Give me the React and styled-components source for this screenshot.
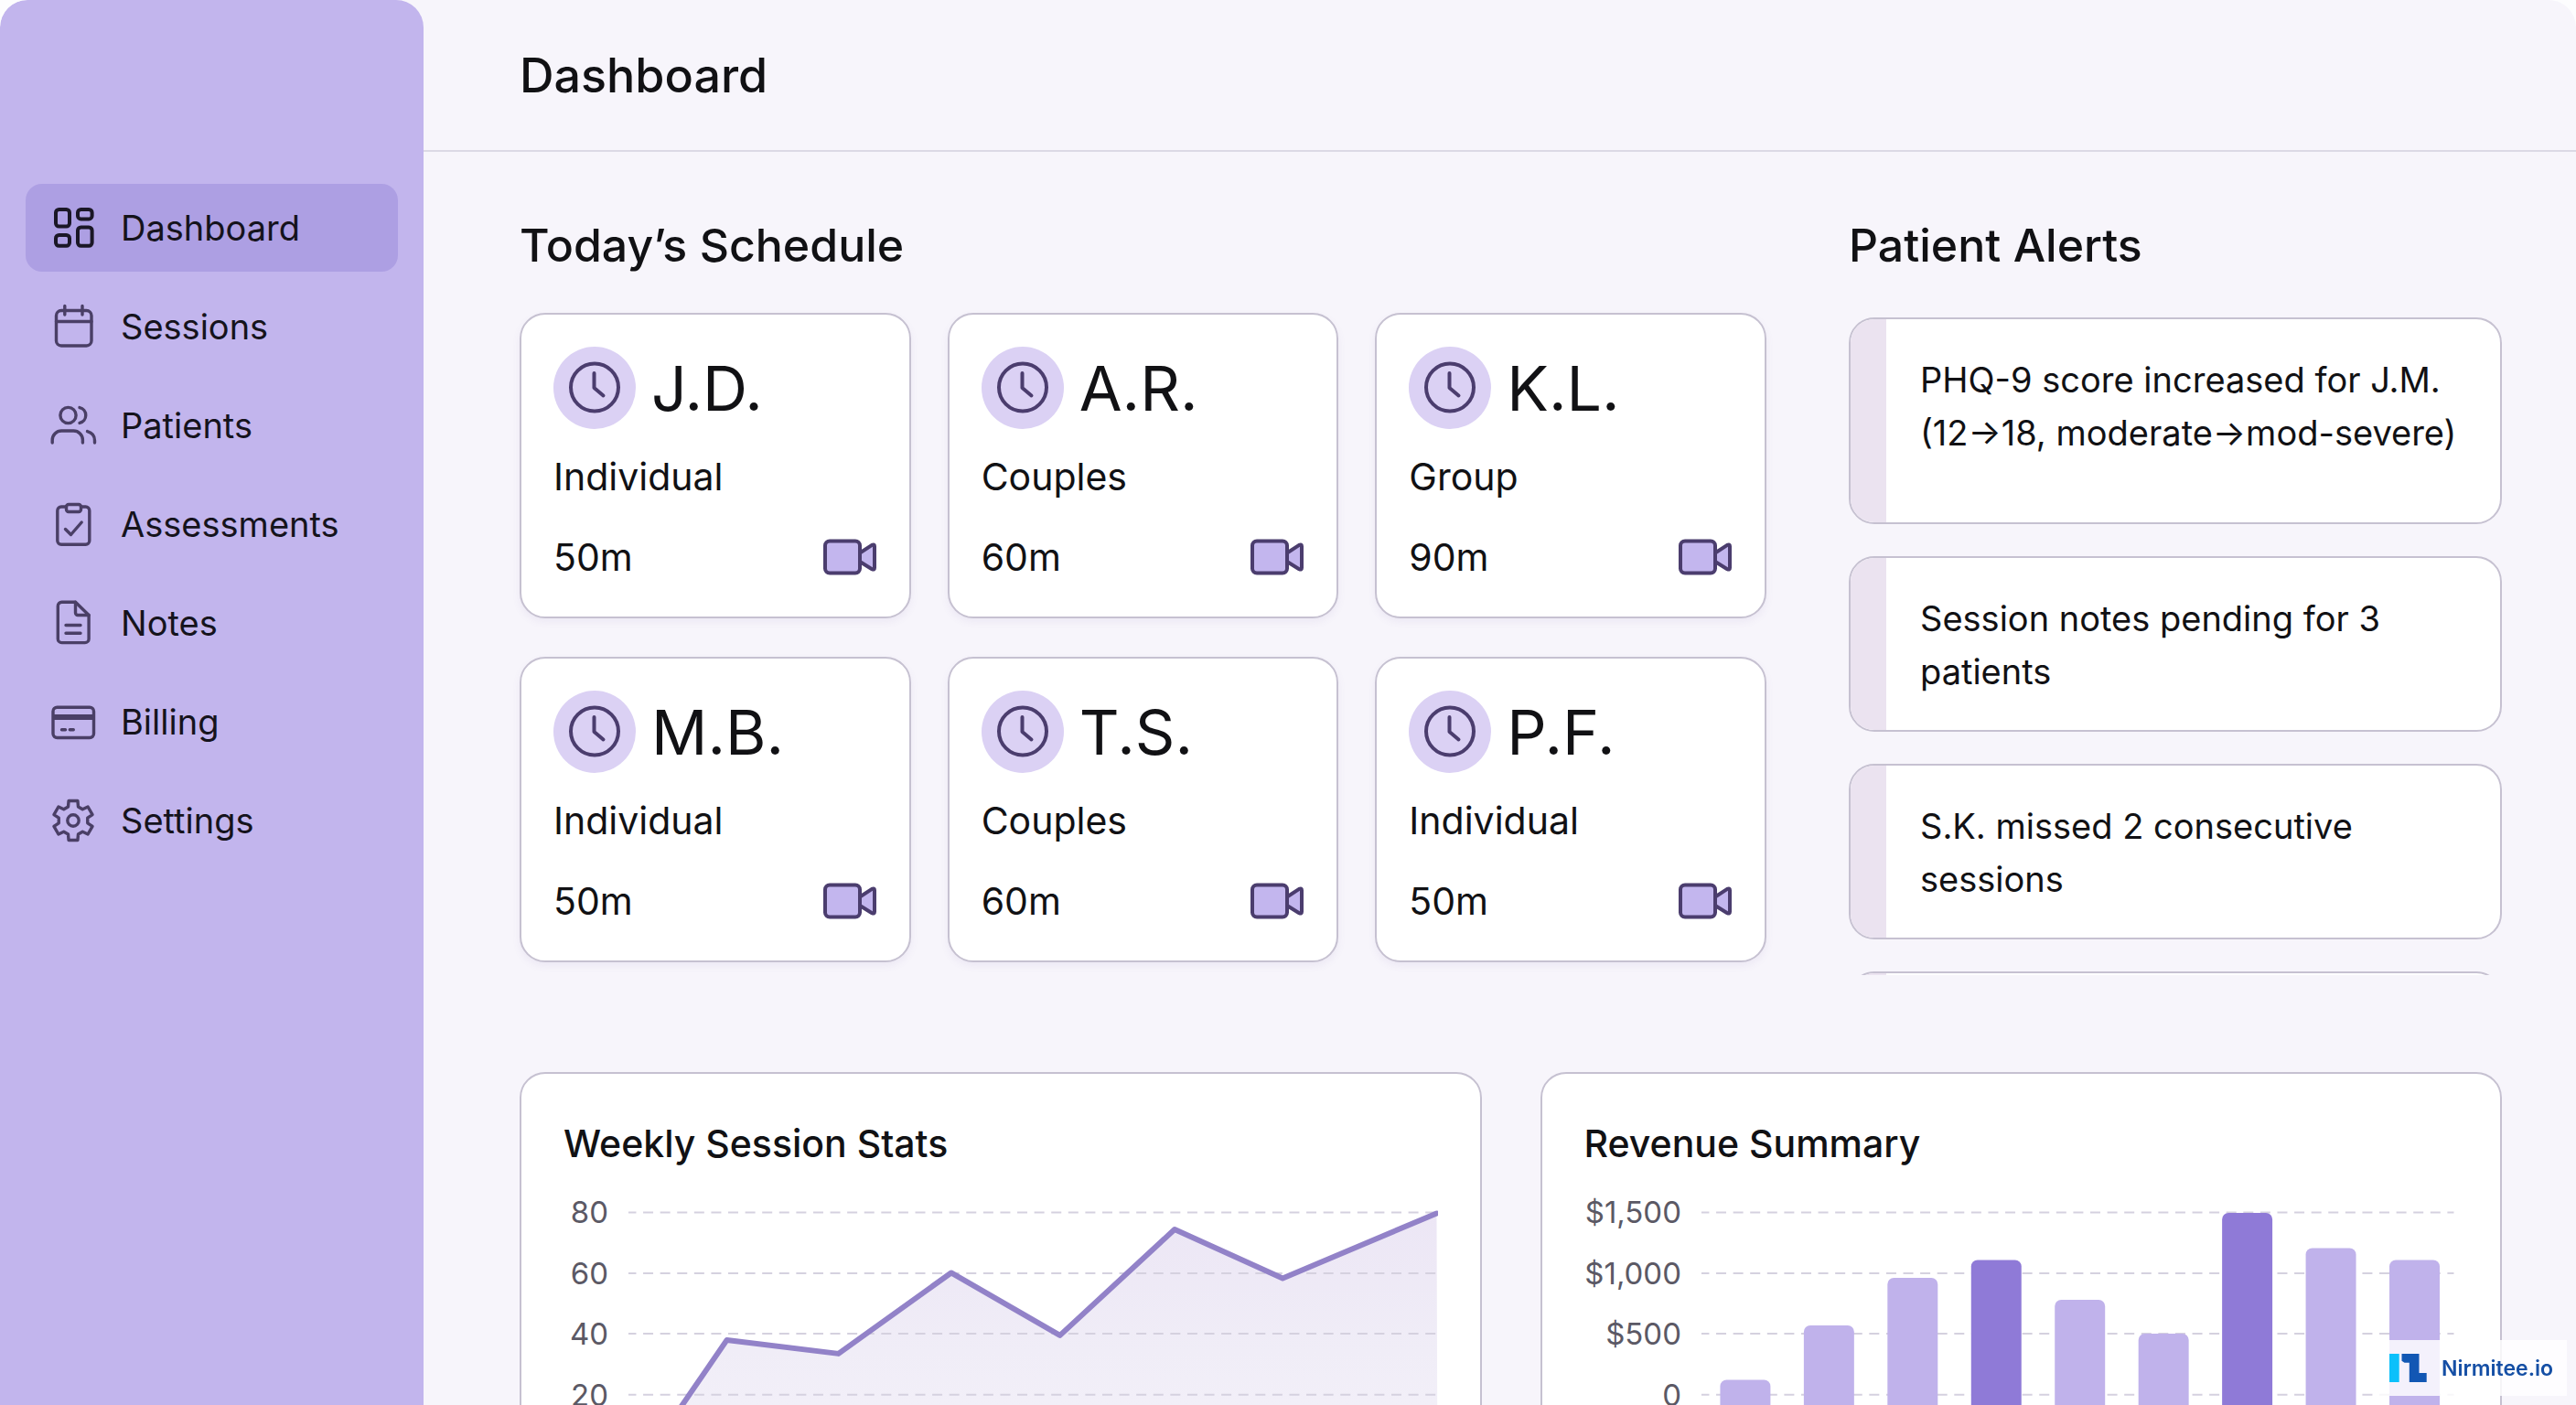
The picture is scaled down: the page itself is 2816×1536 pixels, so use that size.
import * as React from "react";
import styled, { createGlobalStyle } from "styled-components";

const GlobalStyle = createGlobalStyle`
  * {
    box-sizing: border-box;
  }

  body {
    margin: 0;
    background: #fdfdfe;
    color: #111114;
    font-family: "Inter", "Liberation Sans", sans-serif;
  }

  h1, h2, h3, p, ul {
    margin: 0;
    padding: 0;
  }

  ul {
    list-style: none;
  }
`;

const Page = styled.div`
  display: flex;
  height: 100vh;
  overflow: hidden;
  background: #f7f5fb;
  border-radius: 30px 30px 0 0;
`;

const Sidebar = styled.nav`
  flex: none;
  width: 463px;
  padding: 201px 28px 0;
  background: #c2b5ed;
  border-radius: 30px 30px 0 0;

  ul {
    display: flex;
    flex-direction: column;
    gap: 12px;
  }
`;

const NavLink = styled.a`
  display: flex;
  align-items: center;
  gap: 26px;
  height: 96px;
  padding: 0 26px;
  border-radius: 18px;
  font-size: 38px;
  color: #15131c;
  text-decoration: none;
  background: ${(props) => (props.$active ? "#ad9fe3" : "transparent")};

  svg {
    flex: none;
    width: 52px;
    height: 52px;
    fill: none;
    stroke: ${(props) => (props.$active ? "#1b1726" : "#4a3f66")};
    stroke-width: ${(props) => (props.$active ? 4 : 3.4)};
    stroke-linecap: round;
    stroke-linejoin: round;
  }
`;

const Main = styled.main`
  flex: 1;
  min-width: 0;
`;

const Header = styled.header`
  display: flex;
  align-items: center;
  height: 166px;
  padding: 0 105px;
  border-bottom: 2px solid #dcd9e5;

  h1 {
    font-size: 52px;
    font-weight: 500;
  }
`;

const Content = styled.div`
  padding: 70px 81px 0 105px;
`;

const TopRow = styled.div`
  display: grid;
  grid-template-columns: minmax(0, 1fr) 714px;
  gap: 90px;
`;

const SectionTitle = styled.h2`
  font-size: 50px;
  line-height: 64px;
  font-weight: 500;
`;

const ScheduleGrid = styled.ul`
  display: grid;
  grid-template-columns: repeat(3, minmax(0, 1fr));
  gap: 42px 40px;
  margin-top: 42px;
`;

const SessionCard = styled.li`
  padding: 35px 36px 39px 35px;
  background: #fff;
  border: 2px solid #c6c1d1;
  border-radius: 28px;
  box-shadow: 0 4px 8px rgba(110, 90, 170, 0.08);
`;

const SessionHead = styled.div`
  display: flex;
  align-items: center;
  gap: 17px;

  svg {
    flex: none;
    width: 90px;
    height: 90px;
  }

  h3 {
    font-size: 68px;
    line-height: 90px;
    font-weight: 400;
  }
`;

const SessionType = styled.p`
  margin-top: 26px;
  font-size: 41px;
  line-height: 52px;
`;

const SessionFoot = styled.div`
  display: flex;
  align-items: center;
  justify-content: space-between;
  margin-top: 36px;
  font-size: 41px;
  line-height: 52px;
`;

const VideoButton = styled.button`
  display: flex;
  padding: 0;
  border: 0;
  background: none;

  svg {
    width: 58px;
    height: 40px;
  }
`;

const AlertList = styled.ul`
  display: flex;
  flex-direction: column;
  gap: 35px;
  height: 719px;
  margin-top: 47px;
  overflow: hidden;
`;

const AlertCard = styled.li`
  flex: none;
  display: flex;
  min-height: ${(props) => (props.$tall ? "226px" : "192px")};
  overflow: hidden;
  background: #fff;
  border: 2px solid #c6c1d1;
  border-radius: 28px;

  &::before {
    content: "";
    flex: none;
    width: 39px;
    background: #ebe3f0;
  }

  p {
    padding: 37px 24px 35px 37px;
    font-size: 38px;
    line-height: 58px;
  }
`;

const ChartRow = styled.div`
  display: grid;
  grid-template-columns: repeat(2, minmax(0, 1fr));
  gap: 64px;
  margin-top: 106px;
`;

const ChartCard = styled.section`
  padding: 48px 46px;
  background: #fff;
  border: 2px solid #c6c1d1;
  border-radius: 28px;

  h3 {
    font-size: 41px;
    line-height: 56px;
    font-weight: 500;
  }

  svg {
    display: block;
    width: 100%;
    margin-top: 20px;
  }

  text {
    font-size: 33px;
    fill: #5b5965;
    text-anchor: end;
  }
`;

const Brand = styled.a`
  position: fixed;
  right: 10px;
  bottom: 10px;
  display: flex;
  align-items: center;
  gap: 16px;
  height: 61px;
  padding: 0 15px;
  background: rgba(255, 255, 255, 0.82);
  color: #154fa5;
  font-size: 23px;
  font-weight: 600;
  text-decoration: none;

  svg {
    width: 41px;
    height: 31px;
  }
`;

// six teeth, four corners each
const gearPoints = Array.from({ length: 6 }, (_, tooth) =>
  [
    [-20, 16],
    [-13, 22],
    [13, 22],
    [20, 16],
  ].map(([offset, radius]) => {
    const angle = ((tooth * 60 - 90 + offset) * Math.PI) / 180;
    return `${26 + radius * Math.cos(angle)},${26 + radius * Math.sin(angle)}`;
  })
)
  .flat()
  .join(" ");

const navItems = [
  {
    label: "Dashboard",
    icon: (
      <>
        <rect x="7" y="6" width="15" height="18.5" rx="3.5" />
        <rect x="31" y="6" width="15.6" height="10.4" rx="3.5" />
        <rect x="7" y="34" width="15" height="11.8" rx="3.5" />
        <rect x="31" y="25.5" width="15.6" height="20.3" rx="3.5" />
      </>
    ),
  },
  {
    label: "Sessions",
    icon: (
      <>
        <rect x="7.5" y="8.5" width="38.5" height="38.5" rx="5.5" />
        <path d="M16.8 3.5v9.5M36 3.5v9.5M7.5 20.5H46" />
      </>
    ),
  },
  {
    label: "Patients",
    icon: (
      <>
        <circle cx="20.5" cy="15" r="8.6" />
        <path d="M3.2 45v-3a10 10 0 0 1 10-10h13.2a10 10 0 0 1 10 10v3" />
        <path d="M33 6.6a8.6 8.6 0 0 1 0 16.8M41.5 32.6c5 1.4 8 5 8 9.9V45" />
      </>
    ),
  },
  {
    label: "Assessments",
    icon: (
      <>
        <path d="M18.5 7H13a4.2 4.2 0 0 0-4.2 4.2V44a4.2 4.2 0 0 0 4.2 4.2h26.6a4.2 4.2 0 0 0 4.2-4.2V11.2a4.2 4.2 0 0 0-4.2-4.2h-5.1" />
        <rect x="18.5" y="4.5" width="16" height="8" rx="2.5" />
        <path d="M17.5 31.5l6 6L35.2 24" />
      </>
    ),
  },
  {
    label: "Notes",
    icon: (
      <>
        <path d="M28.5 3.2H13.5a4.2 4.2 0 0 0-4.2 4.2v36a4.2 4.2 0 0 0 4.2 4.2h25.4a4.2 4.2 0 0 0 4.2-4.2V17.5z" />
        <path d="M28.5 3.2v11.8a2.5 2.5 0 0 0 2.5 2.5h12.1M18 28.5h16M18 37.2h16" />
      </>
    ),
  },
  {
    label: "Billing",
    icon: (
      <>
        <rect x="4" y="10.2" width="44.5" height="33.3" rx="4.5" />
        <path d="M4 21h44.5" strokeWidth="6" strokeLinecap="butt" />
        <path d="M13.5 34.8h4M22.3 34.8h4" />
      </>
    ),
  },
  {
    label: "Settings",
    icon: (
      <>
        <polygon points={gearPoints} />
        <circle cx="26" cy="26" r="6.2" />
      </>
    ),
  },
];

const sessions = [
  { initials: "J.D.", type: "Individual", duration: "50m" },
  { initials: "A.R.", type: "Couples", duration: "60m" },
  { initials: "K.L.", type: "Group", duration: "90m" },
  { initials: "M.B.", type: "Individual", duration: "50m" },
  { initials: "T.S.", type: "Couples", duration: "60m" },
  { initials: "P.F.", type: "Individual", duration: "50m" },
];

const gridRows = [27.5, 94, 160, 227];

const linePoints = "71,324 178.7,167 300.7,182 424,93.5 543,162 668.4,46 786.6,99.5 955,28.5";

const bars = [
  { top: 210.5 },
  { top: 151 },
  { top: 99 },
  { top: 79.5, strong: true },
  { top: 123 },
  { top: 160 },
  { top: 28, strong: true },
  { top: 66.5 },
  { top: 79.5 },
];

function ClockIcon() {
  return (
    <svg viewBox="0 0 90 90" aria-hidden="true">
      <circle cx="45" cy="45" r="45" fill="#dbd1f4" />
      <g fill="none" stroke="#4b3d6e" strokeWidth="4" strokeLinecap="round" strokeLinejoin="round">
        <circle cx="45" cy="44.5" r="26" />
        <path d="M44.5 29v16l10 8.5" />
      </g>
    </svg>
  );
}

function VideoIcon() {
  return (
    <svg
      viewBox="0 0 58 40"
      fill="#c3b6ee"
      stroke="#4b3d6e"
      strokeWidth="4"
      strokeLinejoin="round"
      aria-hidden="true"
    >
      <path d="M40 15.5L53.2 6.8Q56 5.5 56 8.2V31.8Q56 34.5 53.2 33.2L40 25z" />
      <rect x="2" y="2.5" width="38" height="35" rx="5" />
    </svg>
  );
}

function GridLines({ labels, from, to, labelX }) {
  return gridRows.map((y, i) => (
    <g key={y}>
      <text x={labelX} y={y + 12}>
        {labels[i]}
      </text>
      <path
        d={`M${from} ${y}H${to}`}
        stroke="#d5d1df"
        strokeWidth="2"
        strokeDasharray="11 7.6"
        strokeDashoffset="2.5"
      />
    </g>
  ));
}

function SessionStats() {
  return (
    <ChartCard>
      <h3>Weekly Session Stats</h3>
      <svg viewBox="0 0 956 330" role="img" aria-label="Weekly session stats">
        <defs>
          <linearGradient id="area" x1="0" y1="0" x2="0" y2="1">
            <stop offset="0" stopColor="#ece6f5" />
            <stop offset="0.5" stopColor="#f0edf7" />
            <stop offset="1" stopColor="#f5f2fa" />
          </linearGradient>
        </defs>
        <polygon points={`${linePoints} 956,330 71,330`} fill="url(#area)" />
        <GridLines labels={["80", "60", "40", "20"]} from={71} to={956} labelX={49} />
        <polyline
          points={linePoints}
          fill="none"
          stroke="#9282c8"
          strokeWidth="6"
          strokeLinecap="round"
          strokeLinejoin="round"
        />
      </svg>
    </ChartCard>
  );
}

function RevenueSummary() {
  return (
    <ChartCard>
      <h3>Revenue Summary</h3>
      <svg viewBox="0 0 956 330" role="img" aria-label="Revenue summary">
        <GridLines labels={["$1,500", "$1,000", "$500", "0"]} from={128} to={951} labelX={106} />
        {bars.map((bar, i) => (
          <rect
            key={i}
            x={148.5 + i * 91.5}
            y={bar.top}
            width="55"
            height={350 - bar.top}
            rx="7"
            fill={bar.strong ? "#8f7ad7" : "#c0b2eb"}
          />
        ))}
      </svg>
    </ChartCard>
  );
}

export default function App() {
  return (
    <>
      <GlobalStyle />
      <Page>
        <Sidebar>
          <ul>
            {navItems.map((item, i) => (
              <li key={item.label}>
                <NavLink href="#" $active={i === 0}>
                  <svg viewBox="0 0 52 52" aria-hidden="true">
                    {item.icon}
                  </svg>
                  {item.label}
                </NavLink>
              </li>
            ))}
          </ul>
        </Sidebar>
        <Main>
          <Header>
            <h1>Dashboard</h1>
          </Header>
          <Content>
            <TopRow>
              <section>
                <SectionTitle>Today’s Schedule</SectionTitle>
                <ScheduleGrid>
                  {sessions.map((session) => (
                    <SessionCard key={session.initials}>
                      <SessionHead>
                        <ClockIcon />
                        <h3>{session.initials}</h3>
                      </SessionHead>
                      <SessionType>{session.type}</SessionType>
                      <SessionFoot>
                        {session.duration}
                        <VideoButton aria-label="Start video call">
                          <VideoIcon />
                        </VideoButton>
                      </SessionFoot>
                    </SessionCard>
                  ))}
                </ScheduleGrid>
              </section>
              <section>
                <SectionTitle>Patient Alerts</SectionTitle>
                <AlertList>
                  <AlertCard $tall>
                    <p>
                      PHQ-9 score increased for J.M.
                      <br />
                      (12→18, moderate→mod-severe)
                    </p>
                  </AlertCard>
                  <AlertCard>
                    <p>Session notes pending for 3 patients</p>
                  </AlertCard>
                  <AlertCard>
                    <p>S.K. missed 2 consecutive sessions</p>
                  </AlertCard>
                  <AlertCard />
                </AlertList>
              </section>
            </TopRow>
            <ChartRow>
              <SessionStats />
              <RevenueSummary />
            </ChartRow>
          </Content>
        </Main>
      </Page>
      <Brand href="#">
        <svg viewBox="0 0 41 31" aria-hidden="true">
          <path d="M0 0h10.7v31H0z" fill="#0cc0fb" />
          <path d="M13.5 0h19v21h8.2v10H21.8V9.7h-5.3l-3-2z" fill="#1257b4" />
        </svg>
        Nirmitee.io
      </Brand>
    </>
  );
}
